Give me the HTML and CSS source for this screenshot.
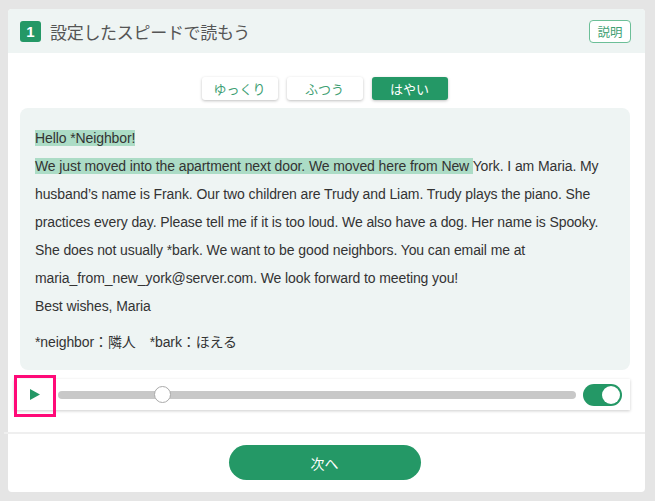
FILE: index.html
```html
<!DOCTYPE html>
<html lang="ja">

<head>
    <meta charset="UTF-8">
    <title>設定したスピードで読もう</title>
    <link rel="stylesheet" href="styles.css">
</head>

<body>

    <section class="card">
        <header class="kopf">
            <div class="titel">
                <span class="nummer">1</span>
                <h1>設定したスピードで読もう</h1>
            </div>
            <button class="hilfe">説明</button>
        </header>

        <div class="tempo">
            <button class="speed">ゆっくり</button>
            <button class="speed">ふつう</button>
            <button class="speed valgt">はやい</button>
        </div>

        <article class="tekst">
            <p><span class="mark">Hello *Neighbor!</span></p>
            <p><span class="mark">We just moved into the apartment next door. We moved here from New </span>York. I am Maria. My husband’s name is Frank. Our two children are Trudy and Liam. Trudy plays the piano. She practices every day. Please tell me if it is too loud. We also have a dog. Her name is Spooky. She does not usually *bark. We want to be good neighbors. You can email me at maria_from_new_york@server.com. We look forward to meeting you!</p>
            <p>Best wishes, Maria</p>
            <p class="ord">*neighbor：隣人　*bark：ほえる</p>
        </article>

        <div class="afspil">
            <button class="play">
                <svg width="10" height="11" viewBox="0 0 10 11"><polygon points="0,0 10,5.5 0,11" fill="#249866" /></svg>
            </button>
            <div class="spor">
                <span class="knap"></span>
            </div>
            <span class="toggle"><span class="prik"></span></span>
            <span class="ramme"></span>
        </div>

        <footer class="fod">
            <button class="naeste">次へ</button>
        </footer>
    </section>

</body>

</html>
```

FILE: styles.css
```css
body {
    background-color: #e5e5e5;
    margin: 0;
    padding: 9px 10px 0 8px;
    font-family: "Liberation Sans", Arial, "Noto Sans CJK JP", sans-serif;
    color: #333;
}

button {
    font-family: "Noto Sans CJK JP", sans-serif;
    cursor: pointer;
}

.card {
    background-color: white;
    border-radius: 4px;
    height: 483px;
}

.kopf {
    background-color: #eef4f3;
    border-radius: 4px 4px 0 0;
    height: 44px;
    display: flex;
    align-items: center;
    justify-content: space-between;
    padding: 0 14px 0 12px;
}

.titel {
    display: flex;
    align-items: center;
}

.nummer {
    width: 21px;
    height: 21px;
    border-radius: 3px;
    background-color: #249866;
    color: white;
    font-weight: bold;
    font-size: 15px;
    display: flex;
    align-items: center;
    justify-content: center;
}

h1 {
    font-family: "Noto Sans CJK JP", sans-serif;
    font-weight: normal;
    font-size: 17px;
    color: #555;
    margin: 0 0 0 9px;
    letter-spacing: -0.3px;
}

.hilfe {
    width: 42px;
    height: 23px;
    border: 1px solid #6cbf98;
    border-radius: 4px;
    background-color: white;
    color: #3f9f74;
    font-size: 12.5px;
    padding: 0;
}

.tempo {
    display: flex;
    justify-content: center;
    gap: 9px;
    padding: 24px 0 8px 0;
    margin-left: -4px;
}

.speed {
    width: 76px;
    height: 23px;
    border: none;
    border-radius: 3px;
    background-color: white;
    color: #3f9f74;
    font-size: 13px;
    padding: 0;
    box-shadow: 0 1px 3px rgba(0, 0, 0, .25);
}

.speed.valgt {
    background-color: #249866;
    color: white;
}

.tekst {
    background-color: #eef4f3;
    border-radius: 8px;
    margin: 0 15px 0 12px;
    padding: 16px 15px 14px 15px;
    font-size: 14px;
    line-height: 28px;
    letter-spacing: -0.1px;
}

.tekst p {
    margin: 0;
}

.mark {
    background-color: #acdcc6;
}

.ord {
    margin-top: 8px !important;
}

.afspil {
    position: relative;
    margin: 9px 15px 0 6px;
    height: 31px;
    background-color: white;
    box-shadow: 0 1px 3px rgba(0, 0, 0, .2);
    display: flex;
    align-items: center;
    padding-right: 8px;
}

.play {
    width: 42px;
    height: 31px;
    border: none;
    background: none;
    padding: 0;
    display: flex;
    align-items: center;
    justify-content: center;
}

.spor {
    position: relative;
    flex: 1;
    height: 8px;
    border-radius: 4px;
    background-color: #c8c8c8;
    margin: 0 7px 0 2px;
}

.knap {
    position: absolute;
    left: 96px;
    top: -5px;
    width: 17px;
    height: 17px;
    border-radius: 50%;
    background-color: white;
    border: 1px solid #aaa;
    box-sizing: border-box;
}

.toggle {
    width: 39px;
    height: 22px;
    border-radius: 11px;
    background-color: #249866;
    display: flex;
    align-items: center;
    justify-content: flex-end;
    padding-right: 2px;
    box-sizing: border-box;
}

.prik {
    width: 18px;
    height: 18px;
    border-radius: 50%;
    background-color: white;
}

.ramme {
    position: absolute;
    left: 0;
    top: -4px;
    width: 42px;
    height: 42px;
    border: 3px solid #ff0a78;
    box-sizing: border-box;
}

.fod {
    margin-top: 22px;
    border-top: 2px solid #efefef;
    padding-top: 11px;
    display: flex;
    justify-content: center;
    margin-left: -4px;
}

.naeste {
    width: 192px;
    height: 35px;
    border: none;
    border-radius: 18px;
    background-color: #249866;
    color: white;
    font-size: 14px;
}
```
